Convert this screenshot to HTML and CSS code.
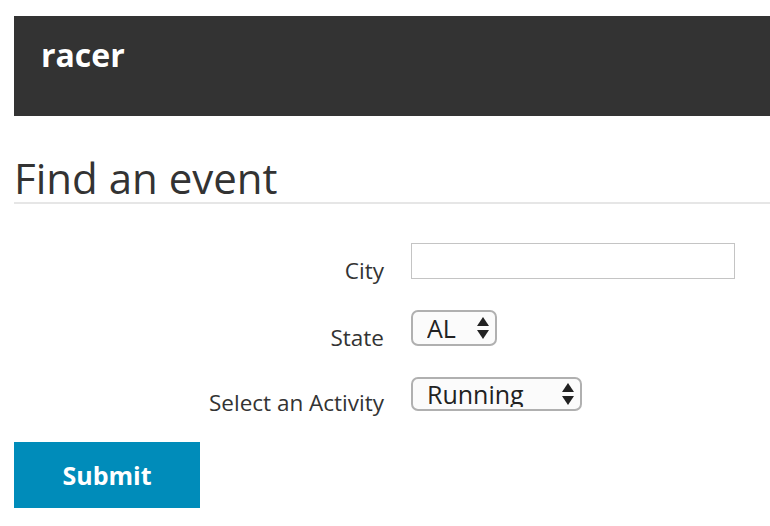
FILE: index.html
```html
<!DOCTYPE html>
<html lang="en">
<head>
<meta charset="utf-8">
<title>racer</title>
<link rel="stylesheet" href="styles.css">
</head>
<body>
<div class="page">
  <header class="topbar"><span class="brand">racer</span></header>
  <h2 class="title">Find an event</h2>
  <form class="form">
    <label class="lbl" for="city">City</label>
    <div class="ctrl"><input id="city" class="input" type="text"></div>

    <label class="lbl" for="state">State</label>
    <div class="ctrl">
      <span class="selwrap">
        <select id="state" class="sel sel-state"><option>AL</option></select>
        <svg class="arrows" width="12" height="22" viewBox="0 0 12 22" aria-hidden="true"><path d="M6 0 L12 9 L0 9 Z"/><path d="M0 13 L12 13 L6 22 Z"/></svg>
      </span>
    </div>

    <label class="lbl" for="activity">Select an Activity</label>
    <div class="ctrl">
      <span class="selwrap">
        <select id="activity" class="sel sel-activity"><option>Running</option></select>
        <svg class="arrows" width="12" height="22" viewBox="0 0 12 22" aria-hidden="true"><path d="M6 0 L12 9 L0 9 Z"/><path d="M0 13 L12 13 L6 22 Z"/></svg>
      </span>
    </div>

    <button class="submit" type="button">Submit</button>
  </form>
</div>
</body>
</html>
```

FILE: styles.css
```css
html, body {
  margin: 0;
  padding: 0;
  background: #ffffff;
}

body {
  font-family: "Open Sans", "DejaVu Sans", sans-serif;
  color: #333333;
}

.page {
  padding: 16px 0 0 14px;
}

.topbar {
  height: 100px;
  box-sizing: border-box;
  background: #333333;
  padding: 21px 0 0 27px;
}

.brand {
  display: block;
  color: #ffffff;
  font-weight: 700;
  font-size: 32px;
  line-height: 36px;
}

.title {
  margin: 38px 0 0 0;
  font-weight: 400;
  font-size: 42px;
  line-height: 48px;
  color: #333333;
  border-bottom: 2px solid #e6e6e6;
}

.form {
  margin-top: 39px;
  display: grid;
  grid-template-columns: 370px 1fr;
  column-gap: 27px;
  row-gap: 31px;
}

.lbl {
  align-self: end;
  justify-self: end;
  font-size: 22.5px;
  line-height: 22px;
  margin-bottom: -3px;
  color: #333333;
}

.ctrl {
  display: flex;
  align-items: flex-end;
}

.input {
  box-sizing: border-box;
  width: 324px;
  height: 36px;
  margin: 0;
  border: 1px solid #c4c4c4;
  border-radius: 0;
  background: #ffffff;
  font: inherit;
  font-size: 20px;
  padding: 0 8px;
}

.selwrap {
  position: relative;
  display: inline-block;
}

.sel {
  appearance: none;
  -webkit-appearance: none;
  box-sizing: border-box;
  margin: 0;
  display: block;
  border: 2px solid #b0b0b0;
  border-radius: 7px;
  background: #fbfbfb;
  font-family: "Open Sans", "DejaVu Sans", sans-serif;
  font-size: 25px;
  color: #222222;
  padding: 0 0 0 14px;
  line-height: 1;
}

.sel-state {
  width: 86px;
  height: 36px;
}

.sel-activity {
  width: 171px;
  height: 34px;
}

.arrows {
  position: absolute;
  right: 8px;
  top: 50%;
  margin-top: -11px;
  fill: #222222;
  pointer-events: none;
}

.submit {
  grid-column: 1 / -1;
  justify-self: start;
  width: 186px;
  height: 66px;
  margin: 0;
  border: none;
  border-radius: 0;
  background: #008cba;
  color: #ffffff;
  font-family: "Open Sans", "DejaVu Sans", sans-serif;
  font-weight: 700;
  font-size: 25px;
  display: flex;
  align-items: center;
  justify-content: center;
  padding: 0;
}
```
